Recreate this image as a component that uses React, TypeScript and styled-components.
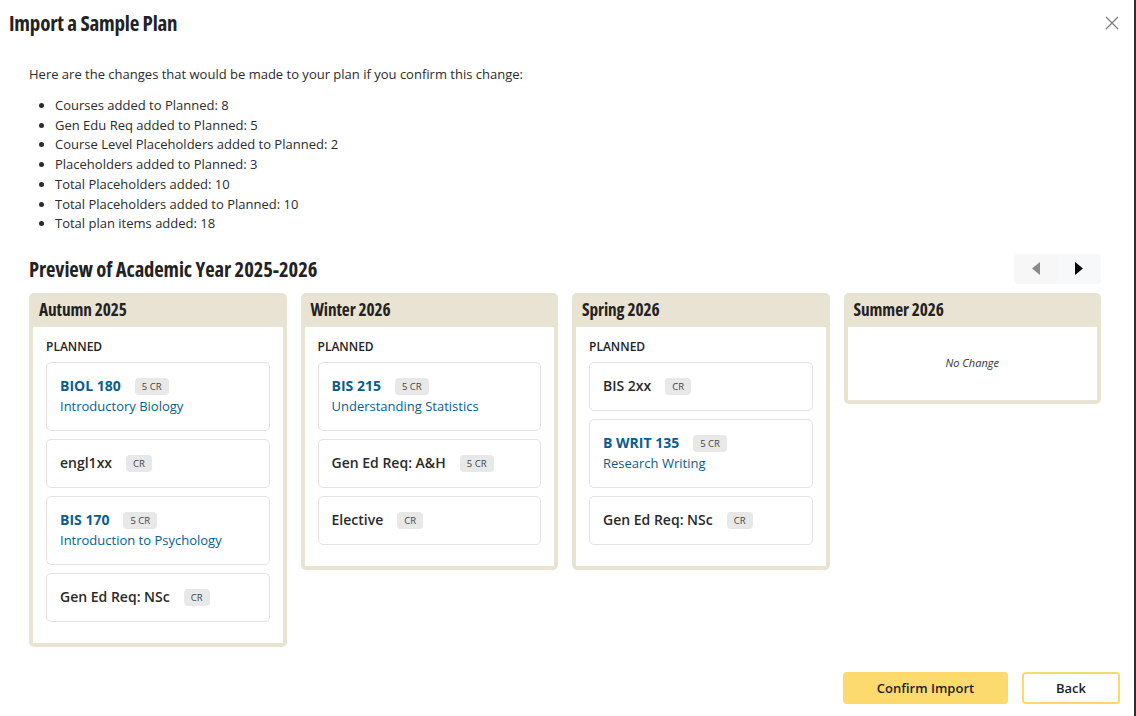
import React from 'react';
import styled, { createGlobalStyle } from 'styled-components';

const GlobalStyle = createGlobalStyle`
    html, body { margin: 0; padding: 0; background: #2f2f2f; }
    body { font-family: "Open Sans", "Liberation Sans", sans-serif; color: #2b2b2b; }
    * { box-sizing: border-box; }
`;

interface PlanItem {
    code: string;
    credits: string;
    title?: string;
    link?: boolean;
}

interface Term {
    name: string;
    items: PlanItem[];
}

const changes = [
    'Courses added to Planned: 8',
    'Gen Edu Req added to Planned: 5',
    'Course Level Placeholders added to Planned: 2',
    'Placeholders added to Planned: 3',
    'Total Placeholders added: 10',
    'Total Placeholders added to Planned: 10',
    'Total plan items added: 18',
];

const terms: Term[] = [
    {
        name: 'Autumn 2025',
        items: [
            { code: 'BIOL 180', credits: '5 CR', title: 'Introductory Biology', link: true },
            { code: 'engl1xx', credits: 'CR' },
            { code: 'BIS 170', credits: '5 CR', title: 'Introduction to Psychology', link: true },
            { code: 'Gen Ed Req: NSc', credits: 'CR' },
        ],
    },
    {
        name: 'Winter 2026',
        items: [
            { code: 'BIS 215', credits: '5 CR', title: 'Understanding Statistics', link: true },
            { code: 'Gen Ed Req: A&H', credits: '5 CR' },
            { code: 'Elective', credits: 'CR' },
        ],
    },
    {
        name: 'Spring 2026',
        items: [
            { code: 'BIS 2xx', credits: 'CR' },
            { code: 'B WRIT 135', credits: '5 CR', title: 'Research Writing', link: true },
            { code: 'Gen Ed Req: NSc', credits: 'CR' },
        ],
    },
    { name: 'Summer 2026', items: [] },
];

const Dialog = styled.div`
    width: 1134px;
    height: 716px;
    background: #fff;
    display: flex;
    flex-direction: column;
`;

const Header = styled.header`
    display: flex;
    align-items: center;
    justify-content: space-between;
    padding: 11px 14px 0 9px;
    height: 35px;
`;

const Title = styled.h1`
    margin: 0;
    font-size: 21px;
    line-height: 24px;
    font-weight: 700;
    font-stretch: 75%;
    letter-spacing: -0.2px;
    color: #222;
`;

const CloseButton = styled.button`
    border: 0;
    background: none;
    padding: 0;
    width: 16px;
    height: 16px;
    display: flex;
    align-items: center;
    justify-content: center;
    cursor: pointer;
`;

const Body = styled.div`
    padding: 0 33px 0 29px;
    flex: 1;
`;

const Intro = styled.p`
    margin: 29px 0 0;
    font-size: 13px;
    line-height: 20px;
`;

const ChangeList = styled.ul`
    margin: 12px 0 0;
    padding-left: 26px;
    font-size: 13px;
    line-height: 19.7px;
`;

const PreviewRow = styled.div`
    margin-top: 20px;
    display: flex;
    align-items: center;
    justify-content: space-between;
`;

const SectionTitle = styled.h2`
    margin: 0;
    font-size: 20.6px;
    line-height: 30px;
    font-weight: 700;
    font-stretch: 75%;
    letter-spacing: -0.1px;
    color: #222;
`;

const Pager = styled.div`
    display: flex;
    width: 87px;
    height: 30px;
    border-radius: 4px;
    overflow: hidden;
`;

const PagerButton = styled.button<{ $disabled?: boolean }>`
    flex: 1;
    border: 0;
    padding: 0;
    display: flex;
    align-items: center;
    justify-content: center;
    background: ${p => (p.$disabled ? '#f7f7f7' : '#f7f8fa')};
    cursor: ${p => (p.$disabled ? 'default' : 'pointer')};
`;

const Terms = styled.div`
    margin-top: 9px;
    display: grid;
    grid-template-columns: repeat(4, 1fr);
    gap: 14px;
    align-items: start;
`;

const TermColumn = styled.section`
    background: #e9e3d4;
    border-radius: 5px;
    padding: 0 4px 4px;
`;

const TermName = styled.h3`
    margin: 0;
    height: 34px;
    display: flex;
    align-items: center;
    padding-left: 6px;
    font-size: 17.3px;
    font-weight: 700;
    font-stretch: 75%;
    letter-spacing: -0.1px;
    color: #222;
`;

const TermBody = styled.div`
    background: #fff;
    padding: 12px 13px 21px;
`;

const GroupLabel = styled.div`
    font-size: 12px;
    line-height: 16px;
    font-weight: 600;
    color: #222;
    margin-bottom: 7px;
`;

const Cards = styled.div`
    display: flex;
    flex-direction: column;
    gap: 8px;
`;

const Card = styled.div<{ $tall?: boolean }>`
    border: 1px solid #e3e3e3;
    border-radius: 5px;
    padding: 0 13px;
    height: ${p => (p.$tall ? '69px' : '49px')};
    display: flex;
    flex-direction: column;
    justify-content: center;
`;

const CardTop = styled.div`
    display: flex;
    align-items: center;
    gap: 14px;
`;

const Code = styled.span<{ $link?: boolean }>`
    font-size: 14px;
    line-height: 20px;
    font-weight: ${p => (p.$link ? 700 : 600)};
    color: ${p => (p.$link ? '#0b5d8d' : '#2a2a2a')};
`;

const Credits = styled.span`
    font-size: 9.5px;
    line-height: 17px;
    padding: 0 7px;
    border-radius: 4px;
    background: #e8e8e8;
    color: #444;
`;

const CourseTitle = styled.div`
    margin-top: 1px;
    font-size: 13px;
    line-height: 19px;
    color: #0b5d8d;
`;

const Empty = styled.div`
    font-size: 11px;
    font-style: italic;
    text-align: center;
    color: #333;
    padding: 16px 0 9px;
`;

const Footer = styled.footer`
    display: flex;
    justify-content: flex-end;
    gap: 14px;
    padding: 0 14px 12px;
`;

const ActionButton = styled.button<{ $primary?: boolean }>`
    height: 32px;
    width: ${p => (p.$primary ? '165px' : '98px')};
    border-radius: 4px;
    border: 2px solid #fcd96a;
    background: ${p => (p.$primary ? '#fdda6e' : '#fff')};
    font-family: "Open Sans", "Liberation Sans", sans-serif;
    font-size: 13px;
    font-weight: 600;
    color: #1e1e1e;
    cursor: pointer;
`;

const PlanCard: React.FC<{ item: PlanItem }> = ({ item }) => (
    <Card $tall={!!item.title}>
        <CardTop>
            <Code $link={item.link}>{item.code}</Code>
            <Credits>{item.credits}</Credits>
        </CardTop>
        {item.title && <CourseTitle>{item.title}</CourseTitle>}
    </Card>
);

export default function App() {
    return (
        <>
            <GlobalStyle />
            <Dialog>
                <Header>
                    <Title>Import a Sample Plan</Title>
                    <CloseButton aria-label="Close">
                        <svg width="14" height="14" viewBox="0 0 14 14">
                            <path d="M1 1L13 13M13 1L1 13" stroke="#808080" strokeWidth="1.4" />
                        </svg>
                    </CloseButton>
                </Header>
                <Body>
                    <Intro>Here are the changes that would be made to your plan if you confirm this change:</Intro>
                    <ChangeList>
                        {changes.map(c => <li key={c}>{c}</li>)}
                    </ChangeList>
                    <PreviewRow>
                        <SectionTitle>Preview of Academic Year 2025-2026</SectionTitle>
                        <Pager>
                            <PagerButton $disabled aria-label="Previous year">
                                <svg width="8" height="13" viewBox="0 0 8 13"><path d="M8 0V13L0 6.5Z" fill="#8a8a8a" /></svg>
                            </PagerButton>
                            <PagerButton aria-label="Next year">
                                <svg width="8" height="13" viewBox="0 0 8 13"><path d="M0 0V13L8 6.5Z" fill="#000" /></svg>
                            </PagerButton>
                        </Pager>
                    </PreviewRow>
                    <Terms>
                        {terms.map(term => (
                            <TermColumn key={term.name}>
                                <TermName>{term.name}</TermName>
                                <TermBody>
                                    {term.items.length > 0 ? (
                                        <>
                                            <GroupLabel>PLANNED</GroupLabel>
                                            <Cards>
                                                {term.items.map(item => <PlanCard key={item.code} item={item} />)}
                                            </Cards>
                                        </>
                                    ) : (
                                        <Empty>No Change</Empty>
                                    )}
                                </TermBody>
                            </TermColumn>
                        ))}
                    </Terms>
                </Body>
                <Footer>
                    <ActionButton $primary>Confirm Import</ActionButton>
                    <ActionButton>Back</ActionButton>
                </Footer>
            </Dialog>
        </>
    );
}
